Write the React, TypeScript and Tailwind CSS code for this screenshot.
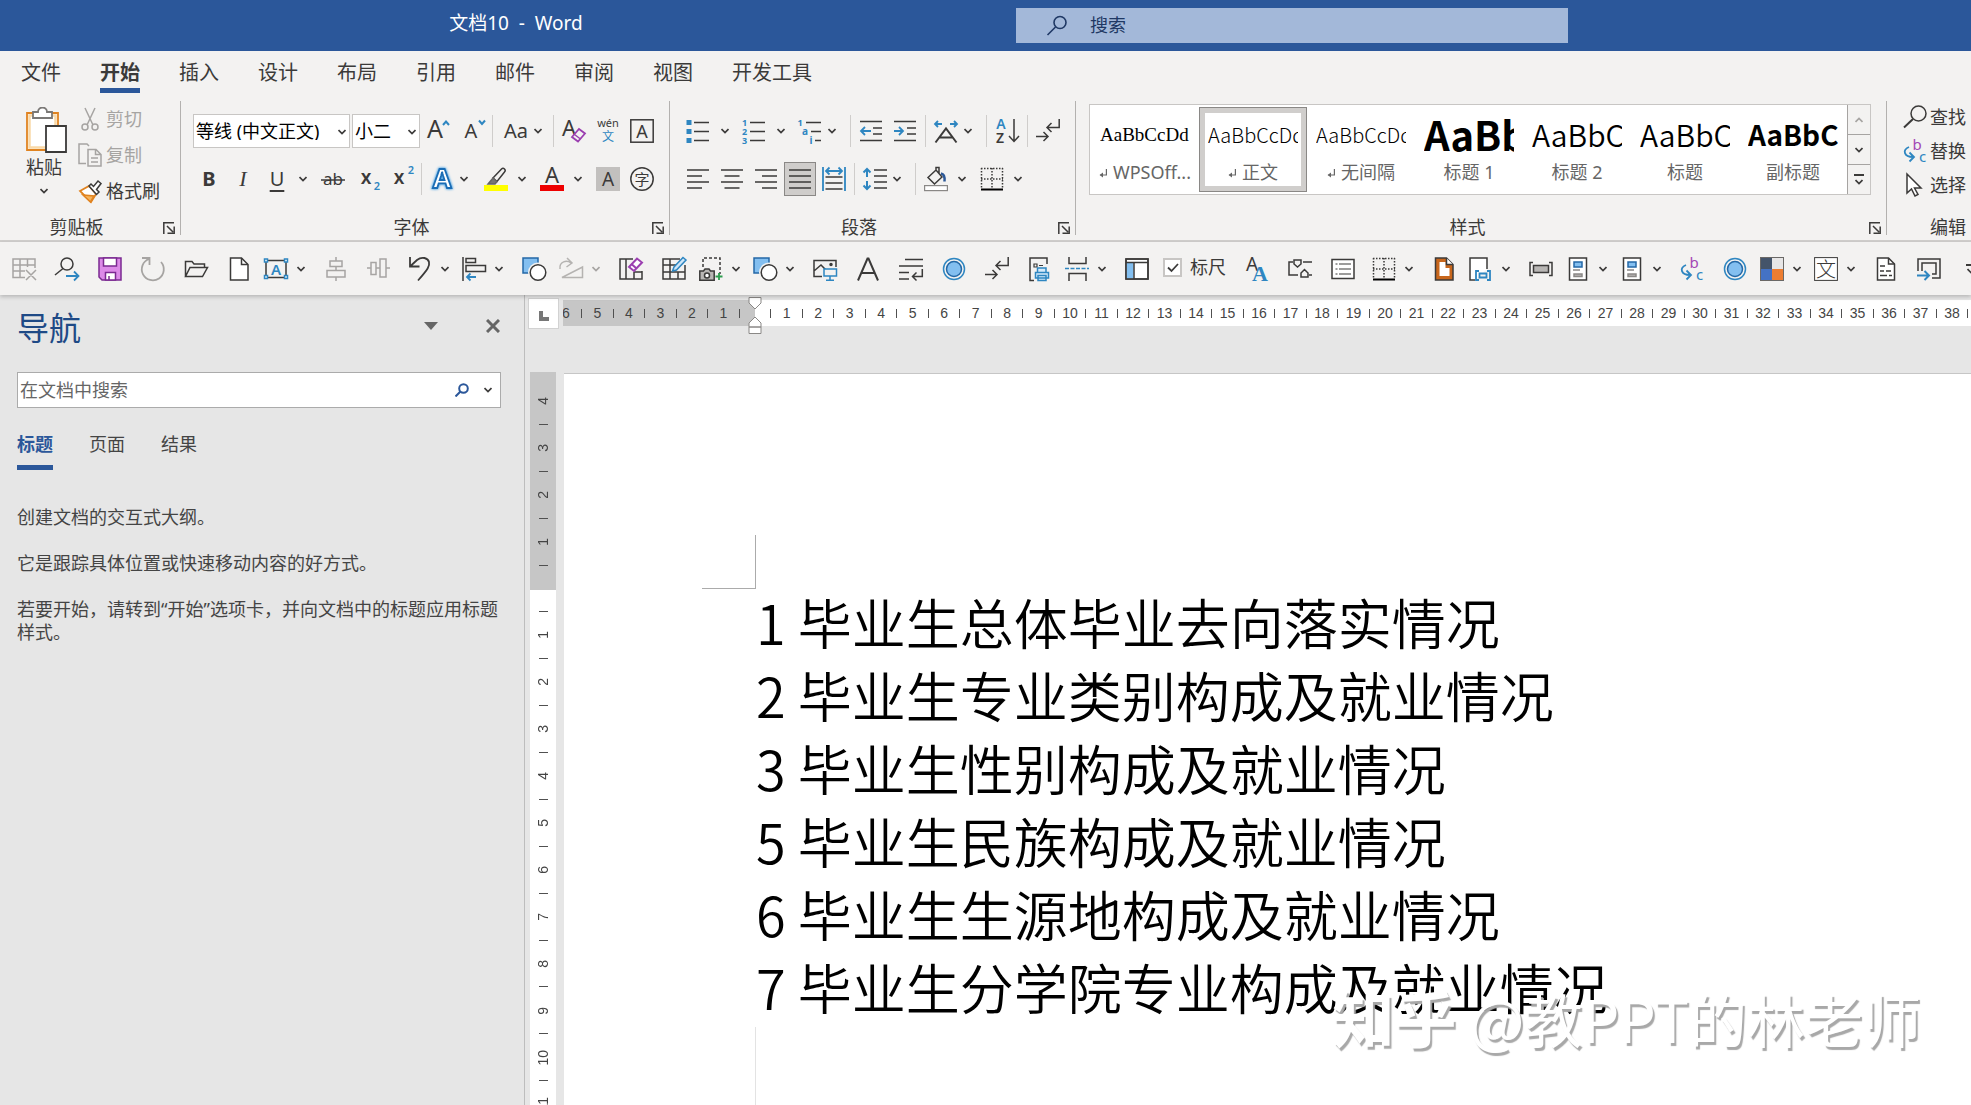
import type { ReactNode } from "react";
import clsx from "clsx";

const INK = "#3b3a39";
const BLUE = "#2e86c1";
const GREY = "#a6a4a2";

type IconProps = { children: ReactNode; color?: string; className?: string };

function Icon({ children, color = INK, className }: IconProps) {
  return (
    <svg
      viewBox="0 0 24 24"
      className={clsx("h-6 w-6 shrink-0 overflow-visible", className)}
      fill="none"
      stroke={color}
      strokeWidth="1.5"
      aria-hidden="true"
    >
      {children}
    </svg>
  );
}

function Chevron({ color = INK }: { color?: string }) {
  return (
    <svg viewBox="0 0 8 6" className="h-[6px] w-2 shrink-0" fill="none" stroke={color} strokeWidth="1.7" aria-hidden="true">
      <path d="M.5 1 4 4.6 7.5 1" />
    </svg>
  );
}

function Letter({ x, y, size, fill = INK, weight = 400, font = "Noto Sans", children }: { x: number; y: number; size: number; fill?: string; weight?: number; font?: string; children: string }) {
  return (
    <text x={x} y={y} fontSize={size} fill={fill} stroke="none" fontWeight={weight} textAnchor="middle" fontFamily={`${font}, 'Noto Sans CJK SC', sans-serif`}>
      {children}
    </text>
  );
}

const icons: Record<string, ReactNode> = {
  grow: (
    <Icon>
      <Letter x={9} y={19} size={25}>A</Letter>
      <path d="m17 6 3-3.500 3 3.500" stroke={BLUE} strokeWidth="2" />
    </Icon>
  ),
  shrink: (
    <Icon>
      <Letter x={9} y={19} size={20}>A</Letter>
      <path d="m17 1.500 3 3.500 3-3.500" stroke={BLUE} strokeWidth="2" />
    </Icon>
  ),
  clear: (
    <Icon>
      <Letter x={7} y={17} size={22}>A</Letter>
      <path d="m10 18 7-8 6 4.500-7 8z" fill="#f3f2f1" stroke="#9b3fb0" strokeWidth="1.800" />
      <path d="m12.500 15.500 6 4.500" stroke="#9b3fb0" />
    </Icon>
  ),
  phonetic: (
    <Icon>
      <Letter x={12} y={8} size={11}>wén</Letter>
      <Letter x={12} y={22} size={12} fill={BLUE}>文</Letter>
    </Icon>
  ),
  boxed: (
    <Icon>
      <rect x=".8" y=".8" width="22.400" height="22.400" />
      <Letter x={12} y={18.500} size={18}>A</Letter>
    </Icon>
  ),
  strike: (
    <Icon>
      <Letter x={12} y={18} size={17}>ab</Letter>
      <path d="M0 13h24" />
    </Icon>
  ),
  sub: (
    <Icon>
      <Letter x={7} y={17} size={19} weight={600}>x</Letter>
      <Letter x={18} y={23} size={11} fill={BLUE} weight={600}>2</Letter>
    </Icon>
  ),
  sup: (
    <Icon>
      <Letter x={6} y={17} size={19} weight={600}>x</Letter>
      <Letter x={18} y={7} size={11} fill={BLUE} weight={600}>2</Letter>
    </Icon>
  ),
  effects: (
    <Icon>
      <text x="12" y="21" fontSize="27" fontWeight="700" fontFamily="Noto Sans" textAnchor="middle" fill="#fff" stroke="#1b6db5" strokeWidth="1.800" className="[filter:drop-shadow(0_0_1px_#4ea3e0)_drop-shadow(0_0_1px_#8cc4ee)]">A</text>
    </Icon>
  ),
  highlight: (
    <Icon>
      <path d="M9 11 17.500 2c1-1 2-1 3 0s1 2 0 3L13 14.500z" />
      <path d="m9 11 4 3.500-2 2.500H4z" fill="#777" stroke="#666" />
      <path d="M0 18h24v6H0z" fill="#ffff00" stroke="none" />
    </Icon>
  ),
  fontColor: (
    <Icon>
      <Letter x={12} y={16} size={22}>A</Letter>
      <path d="M0 18h24v6H0z" fill="#ee0000" stroke="none" />
    </Icon>
  ),
  shadeText: (
    <Icon>
      <path d="M0 0h24v24H0z" fill="#c2c0be" stroke="none" />
      <Letter x={12} y={19} size={19}>A</Letter>
    </Icon>
  ),
  circled: (
    <Icon>
      <circle cx="12" cy="12" r="11.200" />
      <Letter x={12} y={17.500} size={15}>字</Letter>
    </Icon>
  ),
  bullets: (
    <Icon>
      <path d="M.5 1h5v5h-5zM.5 10h5v5h-5zM.5 19h5v5h-5z" fill={BLUE} stroke="none" />
      <path d="M8 3.500h15M8 12.500h15M8 21.500h15" />
    </Icon>
  ),
  numbers: (
    <Icon>
      <Letter x={2.500} y={7} size={9} fill={BLUE} weight={700}>1</Letter>
      <Letter x={2.500} y={16} size={9} fill={BLUE} weight={700}>2</Letter>
      <Letter x={2.500} y={25} size={9} fill={BLUE} weight={700}>3</Letter>
      <path d="M8 3.500h15M8 12.500h15M8 21.500h15" />
    </Icon>
  ),
  multilevel: (
    <Icon>
      <Letter x={2} y={7} size={9} fill={BLUE} weight={700}>1</Letter>
      <Letter x={7} y={16} size={10} fill={BLUE} weight={700}>a</Letter>
      <Letter x={13} y={25} size={10} fill={BLUE} weight={700}>i</Letter>
      <path d="M8 3.500h15M13 12.500h10M17 21.500h6" />
    </Icon>
  ),
  outdent: (
    <Icon>
      <path d="M1 2.500h22M14 9h9M14 15h9M1 21.500h22" />
      <path d="M12 12H2m4-4-4 4 4 4" stroke={BLUE} strokeWidth="1.800" />
    </Icon>
  ),
  indent: (
    <Icon>
      <path d="M1 2.500h22M14 9h9M14 15h9M1 21.500h22" />
      <path d="M1 12h9M6 8l4 4-4 4" stroke={BLUE} strokeWidth="1.800" />
    </Icon>
  ),
  charScale: (
    <Icon>
      <path d="M1.500 23.500 12 9.500l10.500 14M5.500 18.500h13" strokeWidth="2" />
      <path d="M8 5H1m3-3-3 3 3 3M16 5h7m-3-3 3 3-3 3" stroke={BLUE} strokeWidth="1.800" />
    </Icon>
  ),
  sort: (
    <Icon>
      <Letter x={6} y={10} size={14} fill={BLUE} weight={600}>A</Letter>
      <Letter x={5} y={24} size={14} weight={600}>Z</Letter>
      <path d="M19 0v22m-5-5 5 5.500 5-5.500" />
    </Icon>
  ),
  marks: (
    <Icon>
      <path d="M23.200 0v8.500H11m4.500-4.500L11 8.500l4.500 4.500M0 17.500h12M7.500 13l4.500 4.500L7.500 22" />
    </Icon>
  ),
  left: <Icon><path d="M1 3h22M1 9h15M1 15h22M1 21h15" /></Icon>,
  center: <Icon><path d="M1 3h22M4.500 9h15M1 15h22M4.500 21h15" /></Icon>,
  right: <Icon><path d="M1 3h22M8 9h15M1 15h22M8 21h15" /></Icon>,
  justify: <Icon><path d="M1 3h22M1 9h22M1 15h22M1 21h22" /></Icon>,
  distribute: (
    <Icon>
      <path d="M1 0v24M23 0v24M4 4h16M7.500.500 4 4l3.500 3.500M16.500.500 20 4l-3.500 3.500" stroke={BLUE} strokeWidth="1.800" />
      <path d="M3.500 10h17M3.500 16h17M3.500 22h17" />
    </Icon>
  ),
  spacing: (
    <Icon>
      <path d="M4 2v8M.5 5.500 4 2l3.500 3.500M4 14v8M.5 18.500 4 22l3.500-3.500" stroke={BLUE} strokeWidth="2" />
      <path d="M11 3h13M11 9h13M11 15h13M11 21h13" />
    </Icon>
  ),
  bucket: (
    <Icon>
      <path d="m4 10.500 8-7.500 6 7-7.500 7zM12 3V.500h3V7" />
      <path d="M17 6.500c3 .5 4 3 3.500 8" stroke="#2b5797" strokeWidth="2.500" />
      <rect x=".6" y="18.600" width="22.800" height="5" fill="#fff" stroke="#8a8886" strokeWidth="1.200" />
    </Icon>
  ),
  borders: (
    <Icon>
      <path d="M1 1.500h22M1 12h22M1.500 1v21M12 1v21M22.500 1v21" strokeDasharray="1.500 1.500" />
      <path d="M1 22.500h22" stroke="#000" strokeWidth="2" />
    </Icon>
  ),
  tableDel: (
    <Icon color={GREY}>
      <path d="M13 20.500H1V2h22v9M1 8h22M1 14h12M8 2v18M15.500 2v8M14 13l10 10M24 13 14 23" />
    </Icon>
  ),
  findNext: (
    <Icon>
      <circle cx="12" cy="7" r="6" />
      <path d="M8 11.500 0 18" />
      <path d="M11 19h12m-4-4.500 4.500 4.500-4.500 4.500" stroke={BLUE} strokeWidth="1.800" />
    </Icon>
  ),
  save: (
    <Icon color="#7b2a91">
      <path d="M1 1h22v22H4l-3-3z" fill="#dc8ae8" />
      <path d="M5.500 1h13v8h-13zM7.500 15.500h10V23h-10zM11 23v-4" fill="#fff" />
    </Icon>
  ),
  redo: (
    <Icon color={GREY}>
      <path d="M8 2A11 11 0 1 0 20 5M1 1h7.500v7" strokeWidth="1.800" />
    </Icon>
  ),
  open: (
    <Icon>
      <path d="M1.500 19.500v-15H8l2 2.500h10.500v3.500M1.500 19.500l4.500-9h17.500l-5 9z" />
    </Icon>
  ),
  newDoc: (
    <Icon>
      <path d="M3.500 1h11l6.500 6.500V23H3.500z" fill="#fff" />
      <path d="M14.500 1v6.500H21" />
    </Icon>
  ),
  textBox: (
    <Icon>
      <rect x="2" y="3.500" width="20" height="17" />
      <Letter x={12} y={17.500} size={15} fill={BLUE} weight={600}>A</Letter>
      <path d="M.5 2h3v3h-3zM20.500 2h3v3h-3zM.5 18.500h3v3h-3zM20.500 18.500h3v3h-3z" fill="#fff" stroke={BLUE} />
    </Icon>
  ),
  alignV: (
    <Icon color={GREY}>
      <path d="M12 0v4M12 10v4M12 20v4M6 4h12v5.500H6zM3 13.500h18V20H3z" />
    </Icon>
  ),
  alignH: (
    <Icon color={GREY}>
      <path d="M0 11h4M9 11h4M19 11h4M4 5.500h5v12H4zM13 2h6v18h-6z" />
    </Icon>
  ),
  undo: (
    <Icon>
      <path d="M2 0v9.500h9.500M2 9.500 9 3c5-4 11-2 12 2s-1 7-11 18.500" strokeWidth="1.800" />
    </Icon>
  ),
  alignLeft: (
    <Icon>
      <path d="M1 0v24M4 1.500h9.500v4H4zM4 8.500h19.500v6H4z" />
      <path d="M14 20H5m3.500-3.500L5 20l3.500 3.500" stroke={BLUE} strokeWidth="1.800" />
    </Icon>
  ),
  shapes: (
    <Icon>
      <path d="M1 1h15v15H1z" fill="#83bff0" stroke="#2468a6" />
      <circle cx="16" cy="15.500" r="10" fill="#f3f2f1" stroke="none" />
      <circle cx="16" cy="15.500" r="7.800" fill="#fff" />
    </Icon>
  ),
  rotate: (
    <Icon color="#b5b3b1">
      <path d="M3 20.500h20.500V10zM1 12c-1-8 7-9 11-6M8 1l5 5-5.500 4" fill="none" />
    </Icon>
  ),
  eraser: (
    <Icon>
      <path d="M14 2H1v20h22v-8M7 2v20M15 15v7M15 15h8" />
      <path d="m10 10 8-8.500 5 4L15 14z" fill="#fff" stroke="#9b3fb0" strokeWidth="2" />
      <path d="m12.500 7 5 4.500" stroke="#9b3fb0" strokeWidth="2" />
    </Icon>
  ),
  drawTable: (
    <Icon>
      <path d="M18 2H1v20h22V8M1 8h14M1 15h22M8 2v20M16 15v7" />
      <path d="m10.500 14 1.500-4L21 .5l3 2.500-9.500 10z" fill="#cfe6f8" stroke={BLUE} />
    </Icon>
  ),
  screenshot: (
    <Icon>
      <path d="M4 10V1h17v16" strokeDasharray="3 2" />
      <path d="M.8 14h3.700l1.500-2h4l1.500 2h3.700v9.200H.8z" fill="#b8b6b4" />
      <circle cx="8" cy="18.500" r="2.500" fill="#fff" />
      <path d="M20 16v7M16.500 19.500h7" stroke="#2e9e4f" strokeWidth="1.800" />
    </Icon>
  ),
  picture: (
    <Icon>
      <path d="M9 19.500H1v-16h22V10M1 14l7-6 5 5" fill="none" />
      <circle cx="18" cy="7.500" r="1" fill={INK} />
      <path d="M11 12h12.500v7H11zM17 19v4M13 23.300h8" fill="#f3f2f1" stroke={BLUE} />
    </Icon>
  ),
  bigA: <Icon><path d="m2 23.500 9.500-22h1l9.500 22M5.500 16h13" strokeWidth="2" /></Icon>,
  wrap: (
    <Icon>
      <path d="M6 2.500h18M0 9h24M0 15.500h10M0 22h10M23.300 12v7.500H13.500m4-4-4 4 4 4" />
    </Icon>
  ),
  ring: (
    <Icon color={BLUE}>
      <circle cx="12" cy="12" r="10.500" />
      <circle cx="12" cy="12" r="7.500" fill="#83bff0" stroke="#2468a6" />
    </Icon>
  ),
  printDoc: (
    <Icon>
      <path d="M6 23.500H2V1h17v6" />
      <path d="M6 7h3v3H6zM11 8.500h4" strokeWidth="1.200" />
      <path d="M9.500 15v-4H18v4M7.500 15.500h13V21h-13zM10 18.500h8v5h-8z" fill="#d6eafa" stroke={BLUE} />
    </Icon>
  ),
  pageBreak: (
    <Icon>
      <path d="M4 0v6.500h17V0M4 24v-7.500h17V24" />
      <path d="M0 11.500h24" stroke={BLUE} strokeDasharray="4 1.500" />
    </Icon>
  ),
  pane: (
    <Icon>
      <path d="M1 2h22v20H1z" fill="#fff" />
      <path d="M1.500 6h7v15.500h-7z" fill="#83bff0" stroke="none" />
      <path d="M1 5.500h22M9 5.500V22" />
      <path d="M1 2h22v20H1z" />
    </Icon>
  ),
  fontsAA: (
    <Icon>
      <Letter x={7} y={14} size={19}>A</Letter>
      <Letter x={15} y={24} size={22} fill={BLUE} weight={700} font="Liberation Serif">A</Letter>
    </Icon>
  ),
  flow: (
    <Icon>
      <path d="M5 5H1v13h9M15 5h9M21 18h3M6 3h7v4L9.500 10 6 7zM13 20v-4l3.500-3.500L20 16v4z" />
    </Icon>
  ),
  form: (
    <Icon>
      <path d="M1 2.500h22v19H1z" fill="#fff" />
      <path d="M4.500 7h2M8 7h12M4.500 12h2M8 12h12M4.500 17h2M8 17h12" strokeWidth="1.200" />
    </Icon>
  ),
  orangePage: (
    <Icon>
      <path d="M3.500 1h11l6.500 6.500V23H3.500z" fill="#c8661b" />
      <path d="M7.500 5h6v6h4v8h-10z" fill="#fff" stroke="none" />
      <path d="M14.500 1v6.500H21" fill="#fff" />
    </Icon>
  ),
  pageField: (
    <Icon>
      <path d="M6 23H1V1h17v11" fill="#fff" />
      <path d="M10 14H7v9h3M18 14h3v9h-3M10.500 16.500h7v4h-7z" stroke={BLUE} strokeWidth="1.800" />
    </Icon>
  ),
  field: (
    <Icon>
      <path d="M4 5.500H1v13h3M20 5.500h3v13h-3" />
      <path d="M4.500 8.500h15v7h-15z" fill="#b8b6b4" />
    </Icon>
  ),
  docBlock: (
    <Icon>
      <path d="M3.500 1h17v22h-17z" fill="#fff" />
      <path d="M8 5h8v5H8z" fill="#83bff0" stroke="#2468a6" />
      <path d="M7 13h7M8 17h8v2.500H8z" stroke="#8a8886" fill="#b8b6b4" />
    </Icon>
  ),
  replace: (
    <Icon>
      <Letter x={14} y={11} size={15} fill="#a347b5">b</Letter>
      <Letter x={19.500} y={23} size={15} fill={BLUE}>c</Letter>
      <path d="M6 8c-7 3-5 10 4 10M6.500 13.500 11 18l-4.500 4.500" stroke={BLUE} strokeWidth="1.800" />
    </Icon>
  ),
  theme: (
    <Icon>
      <g stroke="none">
        <path d="M0 0h12v12H0z" fill="#44546a" />
        <path d="M12 0h12v12H12z" fill="#e7e6e6" />
        <path d="M0 12h12v12H0z" fill="#4472c4" />
        <path d="M12 12h12v12H12z" fill="#ed7d31" />
      </g>
      <rect x=".5" y=".5" width="23" height="23" stroke="#6a6866" strokeWidth="1" />
    </Icon>
  ),
  wenBox: (
    <Icon>
      <rect x=".6" y=".6" width="22.800" height="22.800" fill="#fff" strokeWidth="1" />
      <Letter x={12} y={19.500} size={20} weight={300}>文</Letter>
    </Icon>
  ),
  docLines: (
    <Icon>
      <path d="M3.500 1h11l6 6V23h-17z" fill="#fff" />
      <path d="M14.500 1v6h6M6 9h5M6 14h4M12 14h5M6 18.500h7M15 18.500h3" />
    </Icon>
  ),
  fieldGo: (
    <Icon>
      <path d="M1 14V2h22v19h-8M5 14V6h14v11h-4" />
      <path d="M0 18.500h12m-4.500-4.500 4.500 4.500L7.500 23" stroke={BLUE} strokeWidth="2" />
    </Icon>
  ),
  find: (
    <Icon>
      <circle cx="15.500" cy="8.500" r="7.500" />
      <path d="M10 14 1 22.500" strokeWidth="2" />
    </Icon>
  ),
  select: (
    <Icon>
      <path d="M4 1v19l4.500-4 3.500 7 3-1.500-3.500-6.500H18z" fill="#fff" />
    </Icon>
  ),
  cut: (
    <Icon color={GREY}>
      <path d="m7 1 8 17M17 1 9 18" />
      <circle cx="7" cy="20" r="3" />
      <circle cx="17" cy="20" r="3" />
    </Icon>
  ),
  copy: (
    <Icon color={GREY}>
      <path d="M8 20.500H1V1h8l2 2M10 6.500h8l5 5V23H10zM17.500 6.500v5H23M13 15h7M13 19h7" />
    </Icon>
  ),
  painter: (
    <Icon>
      <path d="m2 12 9-5 7 8-5 8z" fill="#fff" stroke="#e08320" strokeWidth="1.800" />
      <path d="m5 16 11 1-3.500 6z" fill="#f6b45c" stroke="#e08320" />
      <path d="m11 7 2-2 2.500 2.500L20 2l3 2.500-4.500 6L21 13l-2.500 2.500z" fill="#fff" />
    </Icon>
  ),
};

type ToolProps = { icon: string; label: string; className?: string };

function Tool({ icon, label, className }: ToolProps) {
  return (
    <button aria-label={label} className={clsx("flex h-[34px] shrink-0 items-center justify-center", className ?? "w-8")}>
      {icons[icon]}
    </button>
  );
}

function More({ label, className }: { label: string; className?: string }) {
  return (
    <button aria-label={label} className={clsx("flex h-[34px] shrink-0 items-center justify-center", className ?? "w-5")}>
      <Chevron />
    </button>
  );
}

const Sep = ({ className }: { className?: string }) => <span className={clsx("h-8 w-px shrink-0 bg-[#cfcdcb]", className)} />;
const Divider = () => <span className="h-[134px] w-px shrink-0 bg-[#b3b1af]" />;

function GroupFooter({ name }: { name: string }) {
  return (
    <div className="mt-auto flex h-[22px] items-start pr-[5px]">
      <span className="flex-1 pr-[10px] text-center">{name}</span>
      <button aria-label={`${name}设置`} className="mt-1">
        <svg viewBox="0 0 12 12" className="h-3 w-3" fill="none" stroke={INK} strokeWidth="1.500">
          <path d="M.8 12V.8H11M4 4l6 6M11.200 4.500v6.700H4.500" />
        </svg>
      </button>
    </div>
  );
}

const tabs = ["文件", "开始", "插入", "设计", "布局", "引用", "邮件", "审阅", "视图", "开发工具"];

const sans = "font-['Noto_Sans_CJK_SC',sans-serif]";

const styles = [
  { name: "WPSOff...", sample: "AaBbCcDd", mark: true, font: "font-['Liberation_Serif',serif] text-[19px]" },
  { name: "正文", sample: "AaBbCcDd", mark: true, font: `${sans} font-light text-[20px]` },
  { name: "无间隔", sample: "AaBbCcDd", mark: true, font: `${sans} font-light text-[20px]` },
  { name: "标题 1", sample: "AaBb", mark: false, font: `${sans} font-bold text-[40px]` },
  { name: "标题 2", sample: "AaBbC", mark: false, font: `${sans} font-[350] text-[30px]` },
  { name: "标题", sample: "AaBbC", mark: false, font: `${sans} font-[350] text-[30px]` },
  { name: "副标题", sample: "AaBbC", mark: false, font: `${sans} font-bold text-[28px]` },
];

type Quick = { icon: string; label: string; more?: boolean; wide?: boolean };

const quickBefore: Quick[] = [
  { icon: "tableDel", label: "删除表格" },
  { icon: "findNext", label: "查找下一个" },
  { icon: "save", label: "保存" },
  { icon: "redo", label: "重复" },
  { icon: "open", label: "打开" },
  { icon: "newDoc", label: "新建" },
  { icon: "textBox", label: "文本框", more: true },
  { icon: "alignV", label: "水平居中" },
  { icon: "alignH", label: "垂直居中" },
  { icon: "undo", label: "撤消", more: true, wide: true },
  { icon: "alignLeft", label: "对齐", more: true },
  { icon: "shapes", label: "形状" },
  { icon: "rotate", label: "旋转", more: true },
  { icon: "eraser", label: "橡皮擦" },
  { icon: "drawTable", label: "绘制表格" },
  { icon: "screenshot", label: "屏幕截图", more: true },
  { icon: "shapes", label: "插入形状", more: true },
  { icon: "picture", label: "图片" },
  { icon: "bigA", label: "字体" },
  { icon: "wrap", label: "段落标记" },
  { icon: "ring", label: "宏" },
  { icon: "marks", label: "显示编辑标记" },
  { icon: "printDoc", label: "打印预览" },
  { icon: "pageBreak", label: "分页符", more: true },
  { icon: "pane", label: "导航窗格" },
];

const quickAfter: Quick[] = [
  { icon: "fontsAA", label: "样式集" },
  { icon: "flow", label: "链接" },
  { icon: "form", label: "窗体" },
  { icon: "borders", label: "框线", more: true, wide: true },
  { icon: "orangePage", label: "页面颜色" },
  { icon: "pageField", label: "页脚", more: true },
  { icon: "field", label: "域" },
  { icon: "docBlock", label: "页眉", more: true },
  { icon: "docBlock", label: "文档部件", more: true },
  { icon: "replace", label: "替换文字" },
  { icon: "ring", label: "录制宏" },
  { icon: "theme", label: "主题颜色", more: true },
  { icon: "wenBox", label: "中文版式", more: true },
  { icon: "docLines", label: "文档属性" },
  { icon: "fieldGo", label: "转到" },
];

function QuickItem({ icon, label, more, wide }: Quick) {
  if (!more) return <Tool icon={icon} label={label} className="w-[43px]" />;
  return (
    <div className={clsx("flex w-[54px] shrink-0 items-center pl-1", wide && "ml-1")}>
      <button aria-label={label}>{icons[icon]}</button>
      <button aria-label={`${label}选项`} className="flex h-6 flex-1 items-center justify-center">
        <Chevron color={icon === "rotate" ? GREY : INK} />
      </button>
    </div>
  );
}

const lines = [
  "1 毕业生总体毕业去向落实情况",
  "2 毕业生专业类别构成及就业情况",
  "3 毕业生性别构成及就业情况",
  "5 毕业生民族构成及就业情况",
  "6 毕业生生源地构成及就业情况",
  "7 毕业生分学院专业构成及就业情况",
];

// Ruler labels alternate with half-step ticks: null stands for a tick.
const marginMarks = [6, null, 5, null, 4, null, 3, null, 2, null, 1, null];
const rulerMarks = Array.from({ length: 80 }, (_, i) => (i % 2 ? (i + 1) / 2 : null));
const topMarks = [4, null, 3, null, 2, null, 1, null];
const sideMarks = Array.from({ length: 22 }, (_, i) => (i % 2 ? (i + 1) / 2 : null));

function RulerMarks({ marks, vertical }: { marks: (number | null)[]; vertical?: boolean }) {
  return (
    <>
      {marks.map((mark, i) => (
        <span key={i} className={clsx("flex flex-1 basis-0 items-center justify-center", vertical ? "min-h-0" : "min-w-0")}>
          {mark === null ? (
            <span className={clsx("shrink-0 bg-[#505050]", vertical ? "h-px w-[9px]" : "h-[9px] w-px")} />
          ) : (
            <span className={clsx("shrink-0", vertical && "rotate-180 [writing-mode:vertical-rl]")}>{mark}</span>
          )}
        </span>
      ))}
    </>
  );
}

function TitleBar() {
  return (
    <header className="flex h-[51px] shrink-0 items-center bg-[#2b579a] text-white">
      <div className="flex w-[1016px] justify-center pb-1 pl-4 text-[19px] whitespace-pre">
        <h1>文档10  -  Word</h1>
      </div>
      <label className="flex h-[35px] w-[552px] items-center bg-[#a3b8d9] pl-[30px] text-[#1f3864]">
        <svg viewBox="0 0 24 24" className="h-6 w-6" fill="none" stroke="#1f3864" strokeWidth="1.600">
          <circle cx="14" cy="8.500" r="6" />
          <path d="m9.500 13-8 8" />
        </svg>
        <input aria-label="搜索" placeholder="搜索" className="ml-5 flex-1 bg-transparent text-[18px] outline-none placeholder:text-[#1f3864]" />
      </label>
    </header>
  );
}

function Ribbon() {
  return (
    <section className="flex h-[142px] shrink-0 overflow-hidden border-b-2 border-[#d0cecc] pt-px text-[18px] leading-none">
      <div className="flex w-[180px] shrink-0 flex-col">
        <div className="flex items-start">
          <button className="ml-[22px] flex w-12 flex-col items-center pt-[6px]">
            <svg viewBox="0 0 42 46" className="h-[46px] w-[42px]" fill="none" strokeWidth="1.800">
              <path d="M2 6h31v37H2z" fill="#fff" stroke="#e08320" />
              <path d="M4.500 8.500h26v32h-26z" stroke="#f9d9a8" strokeWidth="2.500" />
              <path d="M8 11V5h5c0-6 9-6 9 0h5v6z" fill="#fff" stroke="#7a7876" />
              <path d="M21 19h20v26H21z" fill="#fff" stroke={INK} />
            </svg>
            <span className="mt-[5px] -ml-1">粘贴</span>
            <span className="mt-3 -ml-1 flex"><Chevron /></span>
          </button>
          <div className="ml-2 flex flex-col">
            <button className="flex h-9 items-center gap-1 text-[#a6a4a2]">{icons.cut}剪切</button>
            <button className="flex h-9 items-center gap-1 text-[#a6a4a2]">{icons.copy}复制</button>
            <button className="flex h-9 items-center gap-1 text-[#3b3a39]">{icons.painter}格式刷</button>
          </div>
        </div>
        <GroupFooter name="剪贴板" />
      </div>
      <Divider />

      <div className="flex w-[488px] shrink-0 flex-col">
        <div className="flex items-center pt-[13px] pl-3">
          <div className="relative w-[157px]">
            <select aria-label="字体" className="h-[34px] w-full appearance-none border border-[#c8c6c4] bg-white pl-[2px] text-[18px] text-black">
              <option>等线 (中文正文)</option>
            </select>
            <span className="pointer-events-none absolute top-[15px] right-1"><Chevron /></span>
          </div>
          <div className="relative ml-[2px] w-[68px]">
            <select aria-label="字号" className="h-[34px] w-full appearance-none border border-[#c8c6c4] bg-white pl-[2px] text-[18px] text-black">
              <option>小二</option>
            </select>
            <span className="pointer-events-none absolute top-[15px] right-1"><Chevron /></span>
          </div>
          <Tool icon="grow" label="增大字号" className="w-9" />
          <Tool icon="shrink" label="减小字号" className="w-9" />
          <Sep />
          <button className="flex w-[60px] items-center justify-center gap-[6px] text-[20px]">
            Aa <Chevron />
          </button>
          <Sep />
          <Tool icon="clear" label="清除格式" className="w-10" />
          <Tool icon="phonetic" label="拼音指南" className="w-7" />
          <Tool icon="boxed" label="字符边框" className="w-10" />
        </div>
        <div className="flex items-center pt-[14px] pl-3">
          <button aria-label="加粗" className="w-8 text-[20px] font-bold">B</button>
          <button aria-label="倾斜" className="w-9 font-['Liberation_Serif',serif] text-[22px] italic">I</button>
          <button aria-label="下划线" className="w-8 text-[20px] underline underline-offset-4">U</button>
          <More label="下划线选项" />
          <Tool icon="strike" label="删除线" className="w-10" />
          <Tool icon="sub" label="下标" className="w-9" />
          <Tool icon="sup" label="上标" />
          <Sep className="mr-1" />
          <Tool icon="effects" label="文本效果" />
          <More label="文本效果选项" className="w-3" />
          <Tool icon="highlight" label="突出显示" className="ml-[10px] w-8" />
          <More label="突出显示选项" />
          <Tool icon="fontColor" label="字体颜色" className="ml-1 w-8" />
          <More label="字体颜色选项" />
          <Tool icon="shadeText" label="字符底纹" className="ml-1 w-8" />
          <Tool icon="circled" label="带圈字符" className="w-9" />
        </div>
        <GroupFooter name="字体" />
      </div>
      <Divider />

      <div className="flex w-[405px] shrink-0 flex-col">
        <div className="flex items-center pt-[13px] pl-3">
          <Tool icon="bullets" label="项目符号" />
          <More label="项目符号选项" className="w-[22px]" />
          <Tool icon="numbers" label="编号" className="ml-[2px] w-8" />
          <More label="编号选项" className="w-[22px]" />
          <Tool icon="multilevel" label="多级列表" className="ml-[2px] w-8" />
          <More label="多级列表选项" className="w-3" />
          <Sep className="ml-3" />
          <Tool icon="outdent" label="减少缩进量" className="ml-1 w-8" />
          <Tool icon="indent" label="增加缩进量" className="ml-[2px] w-8" />
          <Sep className="ml-1" />
          <Tool icon="charScale" label="字符缩放" className="ml-1 w-8" />
          <More label="字符缩放选项" className="w-3" />
          <Sep className="ml-3" />
          <Tool icon="sort" label="排序" className="ml-1 w-8" />
          <Sep className="ml-1" />
          <Tool icon="marks" label="编辑标记" className="ml-1 w-8" />
        </div>
        <div className="flex items-center pt-[14px] pl-3">
          <Tool icon="left" label="左对齐" className="mr-[2px] w-8" />
          <Tool icon="center" label="居中" className="mr-[2px] w-8" />
          <Tool icon="right" label="右对齐" className="mr-[2px] w-8" />
          <Tool icon="justify" label="两端对齐" className="mr-[2px] w-8 border border-[#8a8886] bg-[#cfcdcb]" />
          <Tool icon="distribute" label="分散对齐" />
          <Sep className="ml-1" />
          <Tool icon="spacing" label="行距" className="ml-1 w-8" />
          <More label="行距选项" className="w-3" />
          <Sep className="ml-3" />
          <Tool icon="bucket" label="底纹" className="ml-1 w-8" />
          <More label="底纹选项" />
          <Tool icon="borders" label="边框" className="ml-1 w-8" />
          <More label="边框选项" />
        </div>
        <GroupFooter name="段落" />
      </div>
      <Divider />

      <div className="flex min-w-0 flex-1 flex-col">
        <div className="mt-[3px] mr-[15px] ml-[13px] flex h-[91px] border border-[#c8c6c4] bg-white">
          <div className="flex min-w-0 flex-1 overflow-hidden py-[2px] pl-px">
            {styles.map((style) => (
              <button
                key={style.name}
                className={clsx(
                  "flex w-[108px] shrink-0 flex-col items-center border",
                  style.name === "正文" ? "border-[#8a8886] shadow-[inset_0_0_0_5px_#d0cecc]" : "border-transparent",
                )}
              >
                <span className={clsx("flex h-[53px] w-[90px] items-center overflow-hidden leading-[53px] text-black", style.font)}>
                  {style.sample}
                </span>
                <span className="flex items-center gap-[6px] leading-[22px] text-[#666]">
                  {style.mark && (
                    <svg viewBox="0 0 8 10" className="mt-1 h-[10px] w-2" fill="none" stroke="#666" strokeWidth="1.200">
                      <path d="M7.400 0v6H1.500" />
                      <path d="M4 3.500v5L.5 6z" fill="#666" stroke="none" />
                    </svg>
                  )}
                  {style.name}
                </span>
              </button>
            ))}
          </div>
          <div className="flex w-[23px] shrink-0 flex-col divide-y divide-[#a6a4a2] border-l border-[#a6a4a2] bg-[#f3f2f1]">
            <button aria-label="上一行" className="flex flex-1 items-center justify-center">
              <span className="flex rotate-180"><Chevron color={GREY} /></span>
            </button>
            <button aria-label="下一行" className="flex flex-1 items-center justify-center"><Chevron /></button>
            <button aria-label="其他样式" className="flex flex-1 flex-col items-center justify-center gap-[3px]">
              <span className="h-[2px] w-[10px] bg-[#3b3a39]" />
              <Chevron />
            </button>
          </div>
        </div>
        <GroupFooter name="样式" />
      </div>
      <Divider />

      <div className="flex w-[84px] shrink-0 flex-col pl-4 whitespace-nowrap">
        <button className="flex h-[34px] items-center gap-[3px] pb-[3px]">{icons.find}查找</button>
        <button className="flex h-[34px] items-center gap-[3px] pb-[2px]">{icons.replace}替换</button>
        <button className="flex h-[34px] items-center gap-[3px] pb-[2px]">{icons.select}选择</button>
        <span className="mt-auto h-[22px] pl-[27px]">编辑</span>
      </div>
    </section>
  );
}

function NavPane() {
  return (
    <aside className="w-[525px] shrink-0 border-r border-[#bdbdbd] pr-[23px] pl-[17px] text-[18px] text-[#444]">
      <div className="flex h-[66px] items-center pr-px text-[#1f4a86]">
        <h2 className="flex-1 text-[32px]">导航</h2>
        <button aria-label="窗格选项" className="pb-1">
          <svg viewBox="0 0 14 8" className="h-2 w-[14px]" fill="#666"><path d="M0 0h14L7 8z" /></svg>
        </button>
        <button aria-label="关闭" className="ml-12 pb-1">
          <svg viewBox="0 0 14 14" className="h-[14px] w-[14px]" stroke="#666" strokeWidth="3"><path d="m1 1 12 12M13 1 1 13" /></svg>
        </button>
      </div>
      <div className="mt-[11px] flex h-9 items-center border border-[#ababab] bg-white pr-2">
        <input aria-label="在文档中搜索" placeholder="在文档中搜索" className="min-w-0 flex-1 pl-[2px] outline-none placeholder:text-[#666]" />
        <button aria-label="搜索文档">
          <svg viewBox="0 0 14 14" className="h-[14px] w-[14px]" fill="none" stroke="#2b579a" strokeWidth="2">
            <circle cx="8.500" cy="5.500" r="4.300" />
            <path d="m5.500 8.500-5 5" />
          </svg>
        </button>
        <button aria-label="搜索选项" className="ml-[15px]"><Chevron /></button>
      </div>
      <div className="mt-[23px] flex gap-9">
        <button className="h-[39px] border-b-[5px] border-[#2b579a] pb-[7px] font-bold text-[#2b579a]">标题</button>
        <button className="pb-3">页面</button>
        <button className="pb-3">结果</button>
      </div>
      <div className="mt-9 space-y-[23px] leading-[23px]">
        <p>创建文档的交互式大纲。</p>
        <p>它是跟踪具体位置或快速移动内容的好方式。</p>
        <p>若要开始，请转到“开始”选项卡，并向文档中的标题应用标题样式。</p>
      </div>
    </aside>
  );
}

function DocumentArea() {
  return (
    <main className="flex min-w-0 flex-1 flex-col overflow-hidden font-['Liberation_Sans','Noto_Sans_CJK_SC',sans-serif] text-[14px] text-[#444]">
      <div className="flex h-[77px] shrink-0 pt-[3px] pl-[3px]">
        <button aria-label="制表符" className="flex h-[31px] w-[31px] shrink-0 items-center justify-center border border-[#d2d2d2] bg-white">
          <svg viewBox="0 0 10 10" className="mt-1 h-[10px] w-[10px]" fill="#777"><path d="M0 0h4v6h6v4H0z" /></svg>
        </button>
        <div className="mt-[2px] ml-1 flex h-[26px] min-w-0 flex-1">
          <div className="flex w-[192px] shrink-0 justify-end overflow-hidden bg-[#c6c6c6] pr-2">
            <div className="flex w-[189px] shrink-0"><RulerMarks marks={marginMarks} /></div>
          </div>
          <div className="relative min-w-0 flex-1 bg-white">
            <div className="flex h-full overflow-hidden pl-2">
              <div className="flex w-[1260px] shrink-0"><RulerMarks marks={rulerMarks} /></div>
            </div>
            <svg viewBox="0 0 14 37" className="absolute -top-[3px] -left-[7px] h-[37px] w-[14px]" fill="#fff" stroke="#8a8886">
              <path d="M1 .5h12V6l-6 6-6-6zM7 20l6 6v4H1v-4zM1 30h12v6.500H1z" />
            </svg>
          </div>
        </div>
      </div>
      <div className="flex min-h-0 flex-1 pl-[5px]">
        <div className="flex w-[26px] shrink-0 flex-col overflow-hidden">
          <div className="flex h-[218px] shrink-0 flex-col justify-end bg-[#c6c6c6] pb-[13px]">
            <div className="flex h-[188px] flex-col"><RulerMarks marks={topMarks} vertical /></div>
          </div>
          <div className="flex-1 bg-white pt-[10px]">
            <div className="flex h-[516px] flex-col"><RulerMarks marks={sideMarks} vertical /></div>
          </div>
        </div>
        <article className="relative mt-px ml-2 min-w-0 flex-1 overflow-hidden border-t border-[#c6c6c6] bg-white pt-[161px]">
          <div className="ml-[138px] h-[54px] w-[54px] border-r border-b border-[#ababab]" />
          <div className="-mt-1 pl-[192px] font-['Noto_Sans_CJK_SC',sans-serif] text-[54px] leading-[73px] font-[350] whitespace-nowrap text-black">
            {lines.map((line) => (
              <p key={line}>{line}</p>
            ))}
          </div>
          <div className="mt-1 ml-[191px] h-[80px] w-px bg-[#e3e3e3]" />
          <p className="absolute right-[50px] bottom-[47px] font-['Noto_Sans_CJK_SC',sans-serif] text-[58px] leading-[80px] whitespace-nowrap text-white [text-shadow:2px_3px_1px_#a8a8a8]">
            <b className="text-[62px]">知乎</b> @教PPT的林老师
          </p>
        </article>
      </div>
    </main>
  );
}

export default function App() {
  return (
    <div className="flex h-screen flex-col overflow-hidden bg-[#f3f2f1] font-['Noto_Sans','Noto_Sans_CJK_SC',sans-serif] text-[#3b3a39]">
      <TitleBar />
      <nav className="flex h-[49px] shrink-0 items-start gap-[39px] pt-2 pl-[21px] text-[20px]">
        {tabs.map((tab) => (
          <button
            key={tab}
            className={clsx("h-[34px] border-b-[5px] pb-[2px] leading-[25px]", tab === "开始" ? "border-[#2b579a] font-bold" : "border-transparent")}
          >
            {tab}
          </button>
        ))}
      </nav>
      <Ribbon />
      <div className="relative z-10 flex h-[53px] shrink-0 items-center overflow-hidden bg-[#f3f2f1] pt-px pl-[2px] text-[18px] shadow-[0_2px_4px_rgba(0,0,0,0.2)]">
        {quickBefore.map((item) => <QuickItem key={item.label} {...item} />)}
        <label className="flex w-[77px] shrink-0 items-center gap-2 pb-1 pl-[5px] leading-none whitespace-nowrap">
          <span className="relative flex">
            <input type="checkbox" defaultChecked className="peer h-[19px] w-[19px] appearance-none border-2 border-[#c8c6c4] bg-white" />
            <svg viewBox="0 0 19 19" className="pointer-events-none absolute inset-0 hidden peer-checked:block" fill="none" stroke={INK} strokeWidth="1.800">
              <path d="m5 9.500 3.500 3.500L15 6" />
            </svg>
          </span>
          标尺
        </label>
        {quickAfter.map((item) => <QuickItem key={item.label} {...item} />)}
        <button aria-label="自定义快速访问工具栏" className="ml-4 flex shrink-0 flex-col items-center gap-[2px]">
          <span className="h-[2px] w-[10px] bg-[#3b3a39]" />
          <Chevron />
        </button>
      </div>
      <div className="flex min-h-0 flex-1 bg-[#e6e6e6]">
        <NavPane />
        <DocumentArea />
      </div>
    </div>
  );
}
